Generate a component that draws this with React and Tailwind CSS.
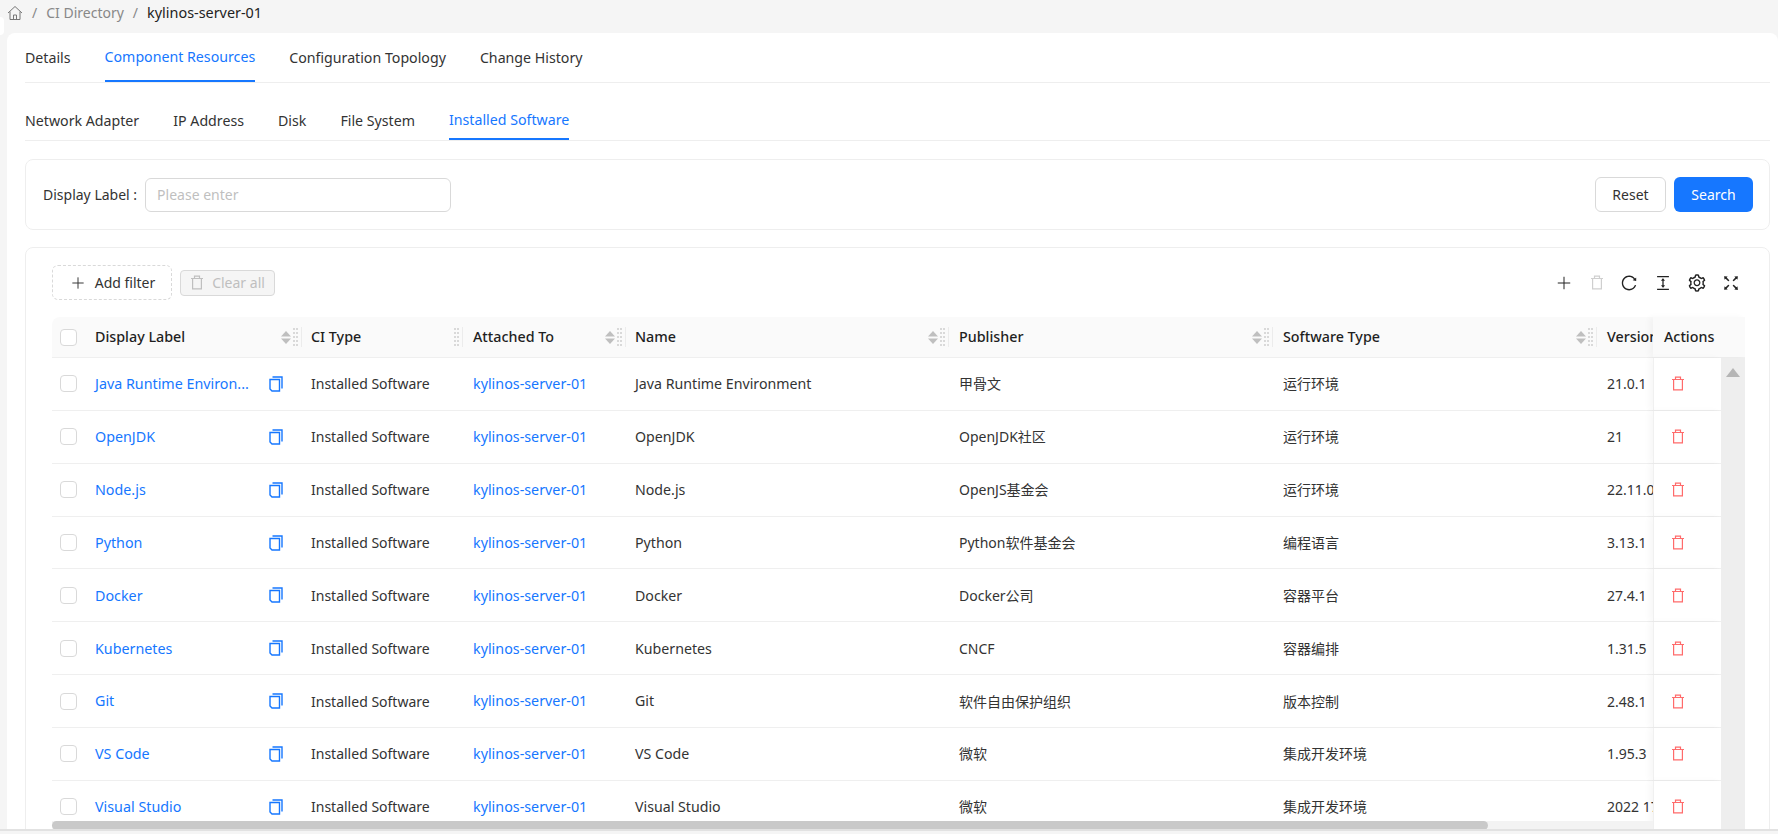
import { Plus } from 'lucide-react';
import { AiOutlineReload, AiOutlineColumnHeight, AiOutlineSetting, AiOutlineFullscreen } from 'react-icons/ai';

const FONT = "font-['Noto_Sans','Noto_Sans_CJK_SC',sans-serif]";
const GRID = 'grid-cols-[33px_217px_161px_163px_323px_324px_324px_56px_68px]';

const ROWS = [
  { label: 'Java Runtime Environ...', name: 'Java Runtime Environment', publisher: '甲骨文', type: '运行环境', version: '21.0.1' },
  { label: 'OpenJDK', name: 'OpenJDK', publisher: 'OpenJDK社区', type: '运行环境', version: '21' },
  { label: 'Node.js', name: 'Node.js', publisher: 'OpenJS基金会', type: '运行环境', version: '22.11.0' },
  { label: 'Python', name: 'Python', publisher: 'Python软件基金会', type: '编程语言', version: '3.13.1' },
  { label: 'Docker', name: 'Docker', publisher: 'Docker公司', type: '容器平台', version: '27.4.1' },
  { label: 'Kubernetes', name: 'Kubernetes', publisher: 'CNCF', type: '容器编排', version: '1.31.5' },
  { label: 'Git', name: 'Git', publisher: '软件自由保护组织', type: '版本控制', version: '2.48.1' },
  { label: 'VS Code', name: 'VS Code', publisher: '微软', type: '集成开发环境', version: '1.95.3' },
  { label: 'Visual Studio', name: 'Visual Studio', publisher: '微软', type: '集成开发环境', version: '2022 17.12' },
];

function HomeIcon() {
  return (
    <svg width="16" height="16" viewBox="0 0 16 16" fill="none" stroke="#777" strokeWidth="1">
      <path d="M1 8 8 1.5 15 8M3 6.5V14.5H13V6.5M6.5 14.5V10H9.5V14.5" />
    </svg>
  );
}

function TrashIcon({ className }) {
  return (
    <svg className={className} width="14" height="15" viewBox="0 0 14 15" fill="none" stroke="currentColor" strokeWidth="1.2">
      <path d="M1 3.5H13M4.5 3.5V1.2H9.5V3.5M2.6 3.5V13.8H11.4V3.5" />
    </svg>
  );
}

function CopyIcon() {
  return (
    <svg width="14" height="16" viewBox="0 0 14 16" fill="none" stroke="#1677ff" strokeWidth="1.4">
      <path d="M3.5 1H13V12.5" />
      <path d="M1 3.5H10.5V15H3L1 13Z" />
    </svg>
  );
}

function SortGrip({ sort = true }) {
  return (
    <div className="flex items-center gap-[2px] h-[20px] pr-[3px] border-r border-[#ececec] self-center">
      {sort && (
        <svg width="10" height="13" viewBox="0 0 10 13" fill="#bfbfbf">
          <path d="M5 0 10 5.5H0Z" />
          <path d="M5 13 0 7.5H10Z" />
        </svg>
      )}
      <svg width="5" height="20" viewBox="0 0 5 20" fill="#d9d9d9">
        {[1, 5, 9, 13, 17].map((y) => (
          <g key={y}>
            <rect x="0" y={y} width="2" height="2" />
            <rect x="3" y={y} width="2" height="2" />
          </g>
        ))}
      </svg>
    </div>
  );
}

function Checkbox() {
  return <span className="block w-[17px] h-[17px] rounded-[4px] border border-[#d9d9d9] bg-white" />;
}

function HeaderCell({ title, sort, grip = true, pad = 'pl-[10px]' }) {
  return (
    <div className={`flex items-center justify-between ${pad} min-w-0 overflow-hidden`}>
      <span className="font-medium text-[14.3px] text-[#1f1f1f] whitespace-nowrap">{title}</span>
      {grip && <SortGrip sort={sort} />}
    </div>
  );
}

function Row({ row }) {
  return (
    <div className={`grid ${GRID} h-[52.86px] items-center border-b border-[#efefef] text-[#333]`}>
      <div className="pl-[8px]">
        <Checkbox />
      </div>
      <div className="flex items-center justify-between pl-[10px] pr-[19px]">
        <span className="text-[14.3px] text-[#1677ff] whitespace-nowrap">{row.label}</span>
        <CopyIcon />
      </div>
      <div className="pl-[9px] whitespace-nowrap">Installed Software</div>
      <div className="pl-[10px] text-[14.3px] text-[#1677ff] whitespace-nowrap">kylinos-server-01</div>
      <div className="pl-[9px] text-[14.2px] whitespace-nowrap">{row.name}</div>
      <div className="pl-[10px] whitespace-nowrap">{row.publisher}</div>
      <div className="pl-[10px] whitespace-nowrap">{row.type}</div>
      <div className="pl-[10px] whitespace-nowrap overflow-hidden">{row.version}</div>
      <div className="flex items-center h-full pl-[17px] bg-white border-l border-[#f0f0f0] shadow-[-4px_0_6px_rgba(0,0,0,0.03)] text-[#ff6b6b]">
        <TrashIcon />
      </div>
    </div>
  );
}

function Tabs({ items, active, height, gap }) {
  return (
    <div className={`flex ${gap} border-b border-[#eeeeee]`}>
      {items.map((item) => (
        <div
          key={item}
          className={
            item === active
              ? `${height} flex items-center border-b-2 border-[#1677ff] text-[#1677ff] -mb-px`
              : `${height} flex items-center text-[#333]`
          }
        >
          {item}
        </div>
      ))}
    </div>
  );
}

function ToolIcon({ width = 'w-[33.6px]', children }) {
  return <div className={`${width} flex justify-center`}>{children}</div>;
}

export default function App() {
  return (
    <div className={`${FONT} relative w-[1778px] h-[834px] overflow-hidden bg-[#f5f5f5] text-[14px] text-[#333]`}>
      {/* corner of the collapsed side menu */}
      <div className="absolute left-0 top-[17px] w-[4px] h-[18px] rounded-r-full bg-white" />

      <div className="h-[33px] flex items-center gap-[9px] pl-[7px] pb-[8px]">
        <HomeIcon />
        <span className="text-[#888]">/</span>
        <span className="text-[#888]">CI Directory</span>
        <span className="text-[#888]">/</span>
        <span className="text-[#222] text-[14.4px]">kylinos-server-01</span>
      </div>

      <div className="h-[796px] ml-[7px] pl-[18px] pr-[8px] pt-[5px] bg-white rounded-t-[8px] overflow-hidden">
        <div className="text-[14.2px]">
          <Tabs
            items={['Details', 'Component Resources', 'Configuration Topology', 'Change History']}
            active="Component Resources"
            height="h-[44px] pb-[4px]"
            gap="gap-[34px]"
          />
        </div>
        <div className="mt-[19px] text-[14.2px]">
          <Tabs
            items={['Network Adapter', 'IP Address', 'Disk', 'File System', 'Installed Software']}
            active="Installed Software"
            height="h-[38px]"
            gap="gap-[34px]"
          />
        </div>

        <div className="mt-[18px] h-[71px] flex items-center justify-between pl-[17px] pr-[16px] border border-[#eeeeee] rounded-[8px]">
          <div className="flex items-center gap-[8px]">
            <span>Display Label :</span>
            <div className="w-[306px] h-[34px] flex items-center px-[11px] border border-[#d9d9d9] rounded-[6px] text-[#bfbfbf]">
              Please enter
            </div>
          </div>
          <div className="flex gap-[8px]">
            <button className="w-[71px] h-[35px] rounded-[6px] border border-[#d9d9d9] bg-white text-[#333]">Reset</button>
            <button className="w-[79px] h-[35px] rounded-[6px] bg-[#1677ff] text-white">Search</button>
          </div>
        </div>

        <div className="mt-[17px] h-[600px] pt-[17px] pl-[26px] pr-[20px] border border-[#eeeeee] rounded-[8px]">
          <div className="h-[35px] flex items-center justify-between">
            <div className="flex items-center gap-[8px]">
              <div className="w-[120px] h-[35px] flex items-center justify-center gap-[8px] border border-dashed border-[#d9d9d9] rounded-[6px] text-[#333]">
                <Plus size={18} strokeWidth={1.3} />
                Add filter
              </div>
              <div className="w-[95px] h-[26px] flex items-center justify-center gap-[8px] border border-[#d9d9d9] rounded-[4px] bg-[#f5f5f5] text-[#bfbfbf]">
                <TrashIcon />
                Clear all
              </div>
            </div>
            <div className="flex items-center text-[#222]">
              <ToolIcon>
                <Plus size={20} strokeWidth={1.2} />
              </ToolIcon>
              <ToolIcon width="w-[31.6px]">
                <TrashIcon className="text-[#cfcfcf]" />
              </ToolIcon>
              <ToolIcon>
                <AiOutlineReload size={18} />
              </ToolIcon>
              <ToolIcon>
                <AiOutlineColumnHeight size={18} />
              </ToolIcon>
              <ToolIcon>
                <AiOutlineSetting size={20} />
              </ToolIcon>
              <ToolIcon width="w-[35.6px]">
                <AiOutlineFullscreen size={20} />
              </ToolIcon>
            </div>
          </div>

          <div className="mt-[17px] w-[1693px] relative">
            <div className="grid grid-cols-[33px_217px_161px_163px_323px_324px_324px_56px_92px] h-[41px] bg-[#fafafa] rounded-t-[8px] border-b border-[#efefef]">
              <div className="flex items-center pl-[8px]">
                <Checkbox />
              </div>
              <HeaderCell title="Display Label" sort />
              <HeaderCell title="CI Type" sort={false} pad="pl-[9px]" />
              <HeaderCell title="Attached To" sort />
              <HeaderCell title="Name" sort pad="pl-[9px]" />
              <HeaderCell title="Publisher" sort />
              <HeaderCell title="Software Type" sort />
              <HeaderCell title="Version" grip={false} />
              <div className="flex items-center pl-[11px] bg-[#fafafa] font-medium text-[14.3px] text-[#1f1f1f] shadow-[-4px_0_6px_rgba(0,0,0,0.03)]">Actions</div>
            </div>

            <div className="flex">
              <div className="w-[1669px] shrink-0">
                {ROWS.map((row) => (
                  <Row key={row.label} row={row} />
                ))}
              </div>
              <div className="w-[24px] h-[471px] bg-[#eeeeee] flex justify-center pt-[10px]">
                <svg width="14" height="9" viewBox="0 0 14 9" fill="#b5b5b5">
                  <path d="M7 0 14 9H0Z" />
                </svg>
              </div>
            </div>

            {/* horizontal scrollbar sits over the last row */}
            <div className="absolute left-0 top-[504px] w-[1601px] h-[9px] bg-[#f3f3f3]">
              <div className="w-[1436px] h-[9px] rounded-[5px] bg-[#c9c9c9]" />
            </div>
          </div>
        </div>
      </div>
      <div className="h-[2px] bg-[#e2e2e2]" />
    </div>
  );
}
